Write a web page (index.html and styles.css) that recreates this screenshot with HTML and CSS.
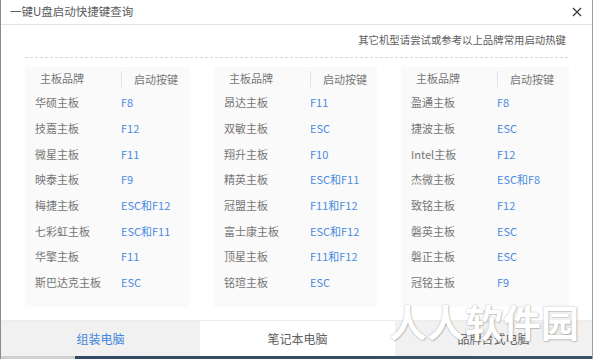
FILE: index.html
```html
<!DOCTYPE html>
<html lang="zh-CN">
<head>
<meta charset="utf-8">
<title>一键U盘启动快捷键查询</title>
<link rel="stylesheet" href="styles.css">
</head>
<body>
<div class="window">
  <div class="titlebar">
    <span class="title">一键U盘启动快捷键查询</span>
    <svg class="close" width="10" height="10" viewBox="0 0 10 10"><path d="M1 1L9 9M9 1L1 9" stroke="#3a3a3a" stroke-width="1.3" fill="none"/></svg>
  </div>
  <div class="content">
    <div class="hint"><span>其它机型请尝试或参考以上品牌常用启动热键</span></div>
    <div class="panels">
      <div class="panel">
        <div class="phead"><span class="hb">主板品牌</span><span class="hk">启动按键</span></div>
        <div class="row"><span class="b">华硕主板</span><span class="k">F8</span></div>
        <div class="row"><span class="b">技嘉主板</span><span class="k">F12</span></div>
        <div class="row"><span class="b">微星主板</span><span class="k">F11</span></div>
        <div class="row"><span class="b">映泰主板</span><span class="k">F9</span></div>
        <div class="row"><span class="b">梅捷主板</span><span class="k">ESC和F12</span></div>
        <div class="row"><span class="b">七彩虹主板</span><span class="k">ESC和F11</span></div>
        <div class="row"><span class="b">华擎主板</span><span class="k">F11</span></div>
        <div class="row"><span class="b">斯巴达克主板</span><span class="k">ESC</span></div>
      </div>
      <div class="panel">
        <div class="phead"><span class="hb">主板品牌</span><span class="hk">启动按键</span></div>
        <div class="row"><span class="b">昂达主板</span><span class="k">F11</span></div>
        <div class="row"><span class="b">双敏主板</span><span class="k">ESC</span></div>
        <div class="row"><span class="b">翔升主板</span><span class="k">F10</span></div>
        <div class="row"><span class="b">精英主板</span><span class="k">ESC和F11</span></div>
        <div class="row"><span class="b">冠盟主板</span><span class="k">F11和F12</span></div>
        <div class="row"><span class="b">富士康主板</span><span class="k">ESC和F12</span></div>
        <div class="row"><span class="b">顶星主板</span><span class="k">F11和F12</span></div>
        <div class="row"><span class="b">铭瑄主板</span><span class="k">ESC</span></div>
      </div>
      <div class="panel">
        <div class="phead"><span class="hb">主板品牌</span><span class="hk">启动按键</span></div>
        <div class="row"><span class="b">盈通主板</span><span class="k">F8</span></div>
        <div class="row"><span class="b">捷波主板</span><span class="k">ESC</span></div>
        <div class="row"><span class="b">Intel主板</span><span class="k">F12</span></div>
        <div class="row"><span class="b">杰微主板</span><span class="k">ESC和F8</span></div>
        <div class="row"><span class="b">致铭主板</span><span class="k">F12</span></div>
        <div class="row"><span class="b">磐英主板</span><span class="k">ESC</span></div>
        <div class="row"><span class="b">磐正主板</span><span class="k">ESC</span></div>
        <div class="row"><span class="b">冠铭主板</span><span class="k">F9</span></div>
      </div>
    </div>
  </div>
  <div class="tabs">
    <div class="tab active">组装电脑</div>
    <div class="tab white">笔记本电脑</div>
    <div class="tab">品牌台式电脑</div>
  </div>
  <div class="taskbar"></div>
  <div class="watermark">人人软件园</div>
</div>
</body>
</html>
```

FILE: styles.css
```css
* { box-sizing: border-box; }
html, body { margin: 0; padding: 0; background: #fff; }
body {
  font-family: "Noto Sans CJK SC", "Noto Sans", sans-serif;
  width: 594px;
  height: 359px;
  overflow: hidden;
}
.window {
  position: relative;
  width: 593px;
  height: 359px;
  border-left: 1px solid #8c8c8c;
  border-right: 1px solid #a0a0a0;
  display: flex;
  flex-direction: column;
  background: #fff;
}
.titlebar {
  height: 25px;
  border-bottom: 1px solid #e3e3e3;
  display: flex;
  align-items: center;
  justify-content: space-between;
  padding: 0 9px 1px 9px;
}
.title {
  font-size: 11.5px;
  color: #5c5c5c;
  line-height: 1;
}
.close { display: block; margin-right: 1px; }
.content {
  padding: 0 24px 0 24px;
  flex: none;
}
.hint {
  height: 33px;
  border-bottom: 1px dashed #d6d6d6;
  display: flex;
  align-items: center;
  justify-content: flex-end;
  padding: 0 2px 1px 0;
}
.hint span {
  font-size: 10.4px;
  color: #5c5c5c;
  line-height: 1;
}
.panels {
  margin-top: 9px;
  display: grid;
  grid-template-columns: 165px 163px 168px;
  column-gap: 24px;
  height: 240px;
}
.panel {
  background: #fafafa;
  display: flex;
  flex-direction: column;
}
.phead {
  height: 23px;
  display: grid;
  grid-template-columns: 86px 1fr;
  align-items: center;
  padding-left: 10px;
  font-size: 11px;
  color: #777;
}
.hb { padding-left: 5px; line-height: 1; }
.hk {
  border-left: 1px solid #e4e4e4;
  padding-left: 12px;
  line-height: 16px;
}
.row {
  height: 25.7px;
  display: grid;
  grid-template-columns: 86px 1fr;
  align-items: center;
  padding-left: 10px;
  font-size: 11px;
  line-height: 1;
}
.b { color: #767676; }
.k { color: #4a8ae0; }
.tabs {
  margin-top: 13px;
  height: 36px;
  display: grid;
  grid-template-columns: 199px 195px 1fr;
}
.tab {
  background: #f1f1f1;
  border-top: 1px solid #ececec;
  display: flex;
  align-items: center;
  justify-content: center;
  font-size: 12px;
  color: #606060;
  padding-bottom: 1px;
}
.tab.active { color: #4486d8; }
.tab.white { background: #fff; }
.taskbar {
  height: 3px;
  background: linear-gradient(to right, #d0d0d0 0, #d0d0d0 74px, #2f4a62 74px, #3b5369 100%);
}
.watermark {
  position: absolute;
  left: 388px;
  top: 300px;
  font-size: 38px;
  font-weight: 700;
  color: #fff;
  letter-spacing: 0;
  line-height: 1.1;
  text-shadow: 0 0 2px rgba(0,0,0,0.28), 1px 1px 1px rgba(0,0,0,0.15);
  white-space: nowrap;
}
```
